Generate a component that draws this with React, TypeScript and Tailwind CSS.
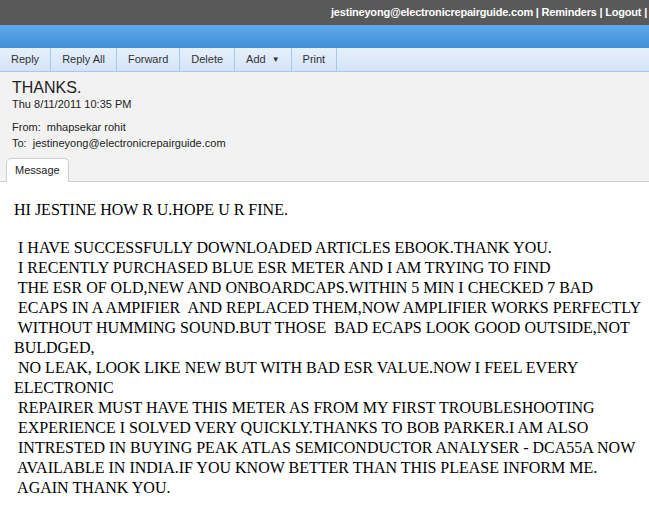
const lines = [
  " I HAVE SUCCESSFULLY DOWNLOADED ARTICLES EBOOK.THANK YOU.",
  " I RECENTLY PURCHASED BLUE ESR METER AND I AM TRYING TO FIND",
  " THE ESR OF OLD,NEW AND ONBOARDCAPS.WITHIN 5 MIN I CHECKED 7 BAD",
  " ECAPS IN A AMPIFIER  AND REPLACED THEM,NOW AMPLIFIER WORKS PERFECTLY",
  " WITHOUT HUMMING SOUND.BUT THOSE  BAD ECAPS LOOK GOOD OUTSIDE,NOT",
  "BULDGED,",
  " NO LEAK, LOOK LIKE NEW BUT WITH BAD ESR VALUE.NOW I FEEL EVERY",
  "ELECTRONIC",
  " REPAIRER MUST HAVE THIS METER AS FROM MY FIRST TROUBLESHOOTING",
  " EXPERIENCE I SOLVED VERY QUICKLY.THANKS TO BOB PARKER.I AM ALSO",
  " INTRESTED IN BUYING PEAK ATLAS SEMICONDUCTOR ANALYSER - DCA55A NOW",
  " AVAILABLE IN INDIA.IF YOU KNOW BETTER THAN THIS PLEASE INFORM ME.",
  " AGAIN THANK YOU.",
];

const actions = ["Reply", "Reply All", "Forward", "Delete", "Add", "Print"];

export default function App() {
  return (
    <div className="h-[514px] w-[649px] overflow-hidden bg-white font-['Liberation_Sans',Arial,sans-serif]">
      {/* Top user bar */}
      <div className="flex h-[25px] items-center overflow-hidden whitespace-nowrap bg-[#595959] pl-[331px] text-[11px] font-bold tracking-[-0.2px] text-white">
        jestineyong@electronicrepairguide.com | Reminders | Logout | Help
      </div>

      {/* Blue banner */}
      <div className="h-[23px] bg-gradient-to-b from-[#5ea9ea] to-[#3f8fd8]" />

      {/* Toolbar */}
      <div className="flex h-[24px] border-b border-[#a9c8ea] bg-gradient-to-b from-[#e6f0fb] to-[#d3e4f7]">
        {actions.map((a) => (
          <div
            key={a}
            className="flex items-center border-r border-[#a9c8ea] px-[11px] text-[11px] text-[#333]"
          >
            {a}
            {a === "Add" && (
              <span className="ml-[6px] text-[8px] leading-none">▼</span>
            )}
          </div>
        ))}
      </div>

      {/* Header */}
      <div className="border-b border-[#cfcfcf] bg-[#f2f2f2] px-[12px] pt-[6px]">
        <div className="text-[16px] leading-[19px] text-[#222]">THANKS.</div>
        <div className="text-[11px] leading-[14px] text-[#222]">
          Thu 8/11/2011 10:35 PM
        </div>
        <div className="mt-[8px] whitespace-pre text-[11px] leading-[16px] text-[#222]">
          {"From:  mhapsekar rohit"}
        </div>
        <div className="whitespace-pre text-[11px] leading-[16px] text-[#222]">
          {"To:  jestineyong@electronicrepairguide.com"}
        </div>
        <div className="-mb-px mt-[7px] flex">
          <div className="-ml-[6px] rounded-t-[5px] border border-b-0 border-[#cfcfcf] bg-white px-[8px] pb-[3px] pt-[3px] text-[11px] text-[#222]">
            Message
          </div>
        </div>
      </div>

      {/* Body */}
      <div className="px-[14px] pt-[18px] font-['Liberation_Serif','Times_New_Roman',serif] text-[16px] leading-[20px] text-black">
        <div className="whitespace-pre">HI JESTINE HOW R U.HOPE U R FINE.</div>
        <div className="h-[18px]" />
        {lines.map((l, i) => (
          <div key={i} className="whitespace-pre">
            {l}
          </div>
        ))}
      </div>
    </div>
  );
}
